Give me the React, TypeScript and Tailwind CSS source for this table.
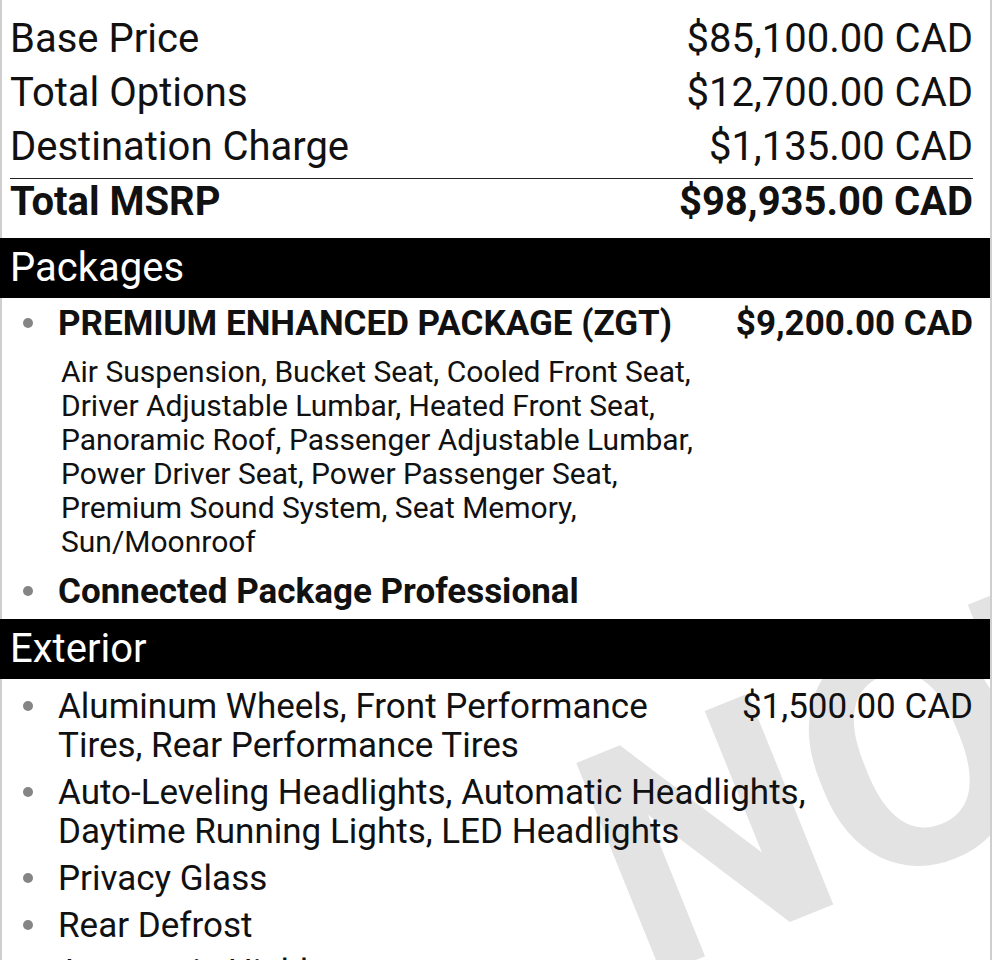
import React from 'react';

type Item = { label: string; price?: string; detail?: string; bold?: boolean };

const summary = [
  { label: 'Base Price', value: '$85,100.00 CAD' },
  { label: 'Total Options', value: '$12,700.00 CAD' },
  { label: 'Destination Charge', value: '$1,135.00 CAD' },
];

const packages: Item[] = [
  {
    label: 'PREMIUM ENHANCED PACKAGE (ZGT)',
    price: '$9,200.00 CAD',
    bold: true,
    detail:
      'Air Suspension, Bucket Seat, Cooled Front Seat, Driver Adjustable Lumbar, Heated Front Seat, Panoramic Roof, Passenger Adjustable Lumbar, Power Driver Seat, Power Passenger Seat, Premium Sound System, Seat Memory, Sun/Moonroof',
  },
  { label: 'Connected Package Professional', bold: true },
];

const exterior: Item[] = [
  { label: 'Aluminum Wheels, Front Performance Tires, Rear Performance Tires', price: '$1,500.00 CAD' },
  { label: 'Auto-Leveling Headlights, Automatic Headlights, Daytime Running Lights, LED Headlights' },
  { label: 'Privacy Glass' },
  { label: 'Rear Defrost' },
  { label: 'Automatic Highbeams' },
];

const Bullet = () => (
  <span className="w-[48px] shrink-0">
    <span className="mt-[14px] ml-[13px] block h-[10px] w-[10px] rounded-full bg-[#858585]" />
  </span>
);

const SectionBar = ({ title }: { title: string }) => (
  <div className="h-[60px] bg-black pl-[10px] text-[40px] leading-[60px] text-white">{title}</div>
);

const ItemRow = ({ item }: { item: Item }) => (
  <li className="flex">
    <Bullet />
    <div className={`min-w-0 flex-1 ${item.price ? '' : 'max-w-[790px]'}`}>
      <div className={item.bold ? 'font-bold leading-[40px]' : 'leading-[39px]'}>{item.label}</div>
      {item.detail && (
        <p className="mt-[11px] pl-[3px] text-[30px] leading-[34px]">{item.detail}</p>
      )}
    </div>
    {item.price && (
      <div className={`ml-[20px] shrink-0 ${item.bold ? 'font-bold leading-[40px]' : 'leading-[39px]'}`}>
        {item.price}
      </div>
    )}
  </li>
);

export default function App() {
  return (
    <div className="relative h-[960px] w-[992px] overflow-hidden bg-white font-['Roboto','Liberation_Sans',sans-serif] text-[#111]">
      {/* watermark */}
      <div
        aria-hidden
        className="pointer-events-none absolute left-[542px] top-[732px] origin-top-left -rotate-[22deg] whitespace-nowrap text-[320px] font-bold leading-none text-[#e3e3e3] select-none"
      >
        NOT
      </div>

      <div className="relative border-r-2 border-[#cfcfcf]">
        {/* totals */}
        <section className="border-l-2 border-[#cfcfcf] pt-[12px] pr-[17px] pb-[13px] pl-2 text-[40px]">
          {summary.map((row) => (
            <div key={row.label} className="flex justify-between leading-[54px]">
              <span>{row.label}</span>
              <span>{row.value}</span>
            </div>
          ))}
          <div className="mt-[4px] h-px bg-[#222]" />
          <div className="flex justify-between font-bold leading-[46px]">
            <span>Total MSRP</span>
            <span>$98,935.00 CAD</span>
          </div>
        </section>

        <SectionBar title="Packages" />
        <section className="border-l-2 border-[#cfcfcf] pt-[6px] pr-[17px] pb-[7px] pl-2 text-[35px]">
          <ul className="flex flex-col gap-[13px]">
            {packages.map((item) => (
              <ItemRow key={item.label} item={item} />
            ))}
          </ul>
        </section>

        <SectionBar title="Exterior" />
        <section className="border-l-2 border-[#cfcfcf] pt-[8px] pr-[17px] pb-[20px] pl-2 text-[35px]">
          <ul className="flex flex-col gap-[8px]">
            {exterior.map((item) => (
              <ItemRow key={item.label} item={item} />
            ))}
          </ul>
        </section>
      </div>
    </div>
  );
}
